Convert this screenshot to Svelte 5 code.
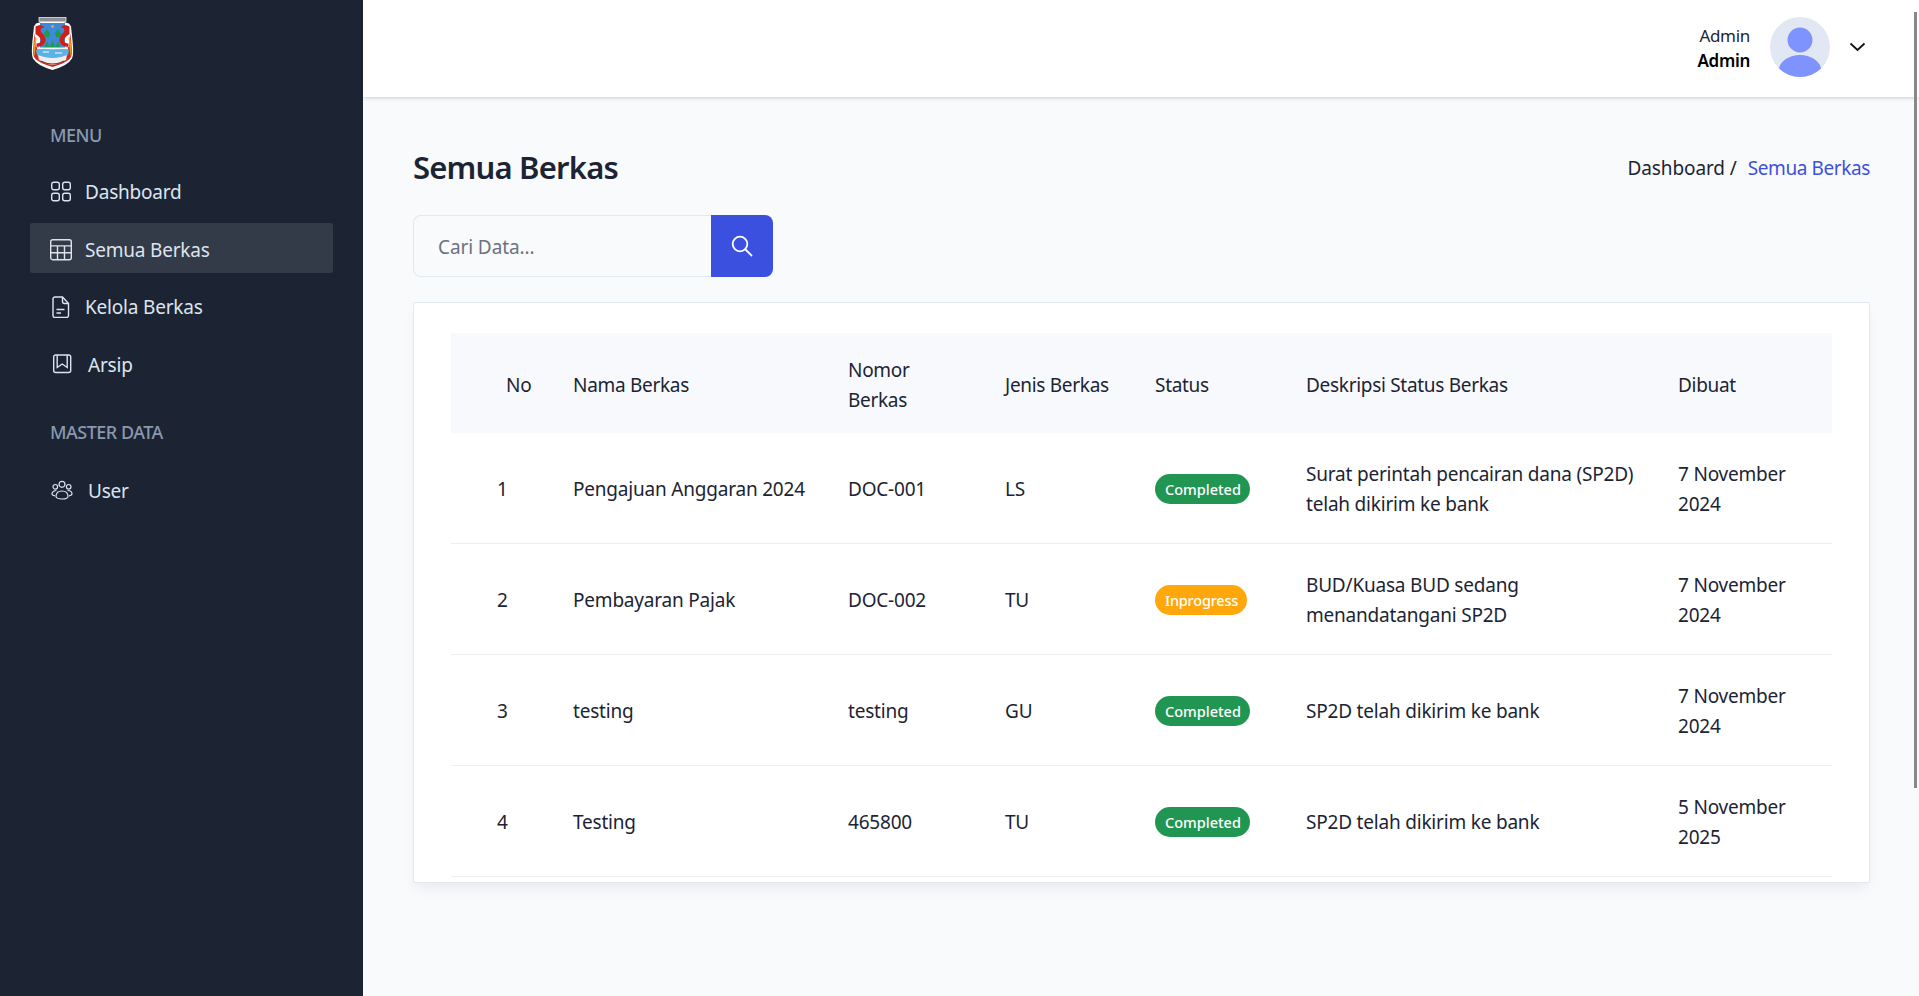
<script>
  const rows = [
    { no: 1, name: 'Pengajuan Anggaran 2024', nomor: 'DOC-001', jenis: 'LS', status: 'Completed', desc: 'Surat perintah pencairan dana (SP2D) telah dikirim ke bank', date: '7 November 2024' },
    { no: 2, name: 'Pembayaran Pajak', nomor: 'DOC-002', jenis: 'TU', status: 'Inprogress', desc: 'BUD/Kuasa BUD sedang menandatangani SP2D', date: '7 November 2024' },
    { no: 3, name: 'testing', nomor: 'testing', jenis: 'GU', status: 'Completed', desc: 'SP2D telah dikirim ke bank', date: '7 November 2024' },
    { no: 4, name: 'Testing', nomor: '465800', jenis: 'TU', status: 'Completed', desc: 'SP2D telah dikirim ke bank', date: '5 November 2025' }
  ];
</script>

<div class="app">
  <aside class="side">
    <div class="logo">
      <svg width="45" height="54" viewBox="0 0 45 54">
        <rect x="9" y="0.500" width="27" height="4" fill="#8d8f94" stroke="#e5e5e5" stroke-width="0.800"/>
        <path d="M6 6.500l5 -1.500h23l5 1.500 2 3 1.500 14q1.500 14 -0.500 18q-4 7 -19.500 11.500q-15.500 -4.500 -19.500 -11.500q-2 -4 -0.500 -18l1.500 -14z" fill="#fff"/>
        <path d="M4.500 16l-1.500 18q0 6 3 8.500q5 4 16.500 7.500q11.500 -3.500 16.500 -7.500q3 -2.500 3 -8.500l-1.500 -18l-1.500 14q-16 5 -33 0z" fill="#cf2a1f"/>
        <path d="M4.800 20l-1.300 14q0 3 1 5l2 -18z M40.200 20l1.300 14q0 3 -1 5l-2 -18z" fill="#f0a21c"/>
        <path d="M10 6h25v25h-25z" fill="#3d8bd6"/>
        <path d="M5.500 9.500q6 -3.500 9 1q-5 0 -3.500 4.500q5 4 4.500 9q-1 5.500 -9 6v-3.500q4 0 4.500 -3q0 -3 -5.500 -6.500z M39.500 9.500q-6 -3.500 -9 1q5 0 3.500 4.500q-5 4 -4.500 9q1 5.500 9 6v-3.500q-4 0 -4.500 -3q0 -3 5.500 -6.500z" fill="#cf1f1a"/>
        <circle cx="22.500" cy="9.500" r="1.300" fill="#f2b632"/>
        <path d="M17 12l3.200 4.500l-1.500 3.800h-3.400l-1.500 -3.800z M28 12l3.200 4.500l-1.500 3.800h-3.400l-1.500 -3.800z" fill="#1f9a55"/>
        <path d="M14 31l3 -7l3 7z M19.500 31l3 -8l3 8z M25 31l3 -7l3 7z" fill="#1f9a55"/>
        <rect x="7" y="30.500" width="31" height="2" fill="#f4f4f4"/>
        <path d="M6 32.500h33l-1 5.500q-8 3 -15.500 3q-8 0 -15.500 -3z" fill="#58b4e8"/>
        <path d="M13 35h6M25 36h7" stroke="#fff" stroke-width="1"/>
        <path d="M8 38q7 3 14.500 3t14.500 -3l-1 5q-6 4 -13.500 5q-8 -1 -13.500 -5z" fill="#eee"/>
        <path d="M10.500 44q6 3 12 3t12 -3" stroke="#8a2a25" stroke-width="1.200" fill="none"/>
      </svg>
    </div>

    <h3 class="sect first">MENU</h3>
    <ul class="nav">
      <li class="item">
        <svg class="ic" width="22" height="22" viewBox="0 0 22 22" fill="none" stroke="#dee4ee" stroke-width="1.400">
          <rect x="1.700" y="1.200" width="7.600" height="7.600" rx="2"/><rect x="12.700" y="1.200" width="7.600" height="7.600" rx="2"/>
          <rect x="1.700" y="12.200" width="7.600" height="7.600" rx="2"/><rect x="12.700" y="12.200" width="7.600" height="7.600" rx="2"/>
        </svg>
        <span>Dashboard</span>
      </li>
      <li class="item active">
        <svg class="ic" width="22" height="22" viewBox="0 0 22 22" fill="none" stroke="#dee4ee" stroke-width="1.400">
          <rect x="0.700" y="0.700" width="20.600" height="20" rx="2"/>
          <path d="M0.700 6.900h20.600M0.700 13.700h20.600M7.500 6.900V20.700M14.500 6.900V20.700"/>
        </svg>
        <span>Semua Berkas</span>
      </li>
      <li class="item">
        <svg class="ic" width="22" height="22" viewBox="0 0 22 22" fill="none" stroke="#dee4ee" stroke-width="1.400">
          <path d="M3 3a2 2 0 0 1 2 -2h7.500l6 6.500v12a2 2 0 0 1 -2 2h-11.500a2 2 0 0 1 -2 -2z"/>
          <path d="M12.500 1v4.500a2 2 0 0 0 2 2h4M6.500 13.500h8M6.500 17h4.500"/>
        </svg>
        <span>Kelola Berkas</span>
      </li>
      <li class="item wide">
        <svg class="ic" width="22" height="22" viewBox="0 0 22 22" fill="none" stroke="#dee4ee" stroke-width="1.400">
          <rect x="2.700" y="1" width="17" height="17.500" rx="2"/>
          <path d="M6.200 1v12.500l5 -3.500l5 3.500V1"/>
        </svg>
        <span>Arsip</span>
      </li>
    </ul>

    <h3 class="sect">MASTER DATA</h3>
    <ul class="nav">
      <li class="item wide">
        <svg class="ic" width="22" height="22" viewBox="0 0 22 22" fill="none" stroke="#dee4ee" stroke-width="1.200">
          <circle cx="11" cy="4.300" r="3"/><circle cx="4.300" cy="6.800" r="2.300"/><circle cx="17.700" cy="6.800" r="2.300"/>
          <path d="M5 16.500c0 -3.500 2.500 -5.500 6 -5.500s6 2 6 5.500c0 1.500 -2.500 2.500 -6 2.500s-6 -1 -6 -2.500z"/>
          <path d="M5.500 10.500c-2.500 0 -4.500 1.300 -4.500 3.200c0 1 1 1.800 3 2.100M16.500 10.500c2.500 0 4.500 1.300 4.500 3.200c0 1 -1 1.800 -3 2.100"/>
        </svg>
        <span>User</span>
      </li>
    </ul>
  </aside>

  <div class="main">
    <header class="top">
      <div class="who">
        <span class="role">Admin</span>
        <span class="uname">Admin</span>
      </div>
      <svg class="avatar" width="60" height="60" viewBox="0 0 60 60">
        <defs><clipPath id="av"><circle cx="30" cy="30" r="30"/></clipPath></defs>
        <circle cx="30" cy="30" r="30" fill="#e2e8f3"/>
        <g clip-path="url(#av)" fill="#7f93ff">
          <circle cx="30" cy="23" r="12.500"/>
          <ellipse cx="30" cy="54" rx="21.500" ry="16"/>
        </g>
      </svg>
      <svg class="chev" width="17" height="10" viewBox="0 0 17 10" fill="none" stroke="#111" stroke-width="1.800">
        <path d="M1.500 1.500L8.500 8l7 -6.500"/>
      </svg>
    </header>

    <main class="content">
      <div class="title-row">
        <h1>Semua Berkas</h1>
        <div class="crumb"><span class="home">Dashboard /</span><span class="cur">Semua Berkas</span></div>
      </div>

      <div class="search">
        <input type="text" placeholder="Cari Data..." />
        <button aria-label="Cari">
          <svg width="24" height="24" viewBox="0 0 24 24" fill="none" stroke="#fff" stroke-width="1.800">
            <circle cx="10" cy="10" r="7.300"/><path d="M15.500 15.500l6.500 6.500"/>
          </svg>
        </button>
      </div>

      <section class="card">
        <table>
          <colgroup>
            <col style="width:106px"/><col style="width:275px"/><col style="width:157px"/><col style="width:150px"/>
            <col style="width:151px"/><col style="width:372px"/><col/>
          </colgroup>
          <thead>
            <tr>
              <th class="c-no">No</th><th>Nama Berkas</th><th>Nomor Berkas</th><th>Jenis Berkas</th>
              <th>Status</th><th>Deskripsi Status Berkas</th><th>Dibuat</th>
            </tr>
          </thead>
          <tbody>
            {#each rows as r}
              <tr>
                <td class="c-no">{r.no}</td>
                <td>{r.name}</td>
                <td>{r.nomor}</td>
                <td>{r.jenis}</td>
                <td><span class="badge" class:warn={r.status === 'Inprogress'}>{r.status}</span></td>
                <td>{r.desc}</td>
                <td>{r.date}</td>
              </tr>
            {/each}
          </tbody>
        </table>
      </section>
    </main>
  </div>

  <div class="scroll"></div>
</div>

<style>
  :global(body) {
    margin: 0;
    background: #f9fafc;
    font-family: "Noto Sans", "Open Sans", sans-serif;
    font-size: 19px;
    letter-spacing: -0.2px;
    color: #1c2434;
  }
  .app { display: flex; min-height: 996px; height: 996px; overflow: hidden; }

  .side { flex: 0 0 363px; background: #1c2434; padding: 0 30px; box-sizing: border-box; }
  .logo { padding-top: 17px; height: 54px; }
  .sect { margin: 0; padding-left: 20px; font-size: 18px; line-height: 24px; font-weight: 500; color: #8a99af; letter-spacing: -0.5px; }
  .sect.first { margin-top: 52px; margin-bottom: 18px; }
  .nav + .sect { margin-top: 32px; margin-bottom: 20px; }
  .nav { list-style: none; margin: 0; padding: 0; display: flex; flex-direction: column; gap: 7.500px; width: 303px; }
  .item { display: flex; align-items: center; gap: 13px; height: 50px; box-sizing: border-box; padding: 4px 0 0 20px; color: #dee4ee; border-radius: 2px; }
  .item.active { background: #333a48; }
  .item.wide { gap: 15px; padding-left: 21px; }
  .ic { flex: none; }

  .main { flex: 1; min-width: 0; display: flex; flex-direction: column; }
  .top { flex: 0 0 97px; box-sizing: border-box; height: 97px; background: #fff; display: flex; align-items: center; justify-content: flex-end; padding: 0 53px 3px 0; box-shadow: 0 1px 4px rgba(0, 0, 0, 0.18); }
  .who { display: flex; flex-direction: column; align-items: flex-end; line-height: 25px; margin-right: 20px; font-size: 17px; padding-top: 1px; }
  .role { color: #1c2434; letter-spacing: -0.3px; }
  .uname { color: #000; font-weight: 600; letter-spacing: -0.3px; }
  .avatar { flex: none; }
  .chev { margin-left: 19px; flex: none; }

  .content { padding: 47px 49px 0 50px; }
  .title-row { display: flex; justify-content: space-between; align-items: center; height: 46px; margin-bottom: 25px; }
  h1 { margin: 0; font-size: 31px; line-height: 46px; font-weight: 600; color: #1c2434; letter-spacing: -0.8px; }
  .crumb { display: flex; gap: 11px; color: #1c2434; padding-top: 2px; }
  .home { letter-spacing: -0.1px; }
  .cur { color: #3c50e0; letter-spacing: -0.4px; }

  .search { display: flex; width: 360px; height: 62px; margin-bottom: 25px; }
  .search input { flex: 1; min-width: 0; box-sizing: border-box; border: 1px solid #e2e8f0; border-right: 0; border-radius: 8px 0 0 8px; background: transparent; padding: 2px 24px 0; font: inherit; letter-spacing: -0.1px; color: #1c2434; outline: none; }
  .search input::placeholder { color: #6b7280; opacity: 1; }
  .search button { flex: 0 0 62px; border: 0; padding: 0; background: #3c50e0; border-radius: 0 8px 8px 0; display: flex; align-items: center; justify-content: center; }

  .card { box-sizing: border-box; background: #fff; border: 1px solid #e2e8f0; border-radius: 2px; padding: 30px 37px 5px; height: 581px; box-shadow: 0 8px 13px -3px rgba(0, 0, 0, 0.07); }
  table { width: 1381px; border-collapse: collapse; table-layout: fixed; }
  th, td { text-align: left; font-weight: 400; line-height: 30px; color: #1c2434; }
  th { height: 100px; box-sizing: border-box; padding: 4px 16px 0; background: #f7f9fc; letter-spacing: -0.3px; }
  td { height: 109px; box-sizing: content-box; padding: 1px 16px 0; border-bottom: 1px solid #eeeeee; }
  th.c-no { padding-left: 55px; }
  td.c-no { padding-left: 46px; }
  .badge { display: inline-block; height: 30px; line-height: 30px; padding: 0 9px 0 10px; border-radius: 15px; background: #219653; color: #fff; font-size: 14.500px; font-weight: 500; vertical-align: middle; letter-spacing: 0; }
  .badge.warn { background: #ffa70b; letter-spacing: -0.2px; }

  .scroll { position: absolute; left: 1914px; top: 12px; width: 3px; height: 776px; background: #888; }
</style>
